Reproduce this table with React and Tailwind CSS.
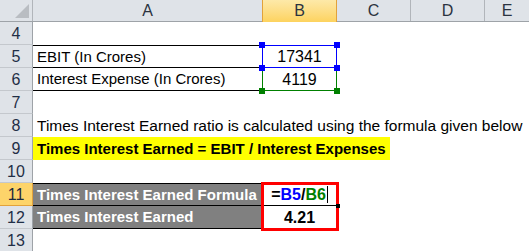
import React from "react";

const font = { fontFamily: "'Liberation Sans', Arial, sans-serif" };

function RowHead({ n, active }) {
  return (
    <div
      className={
        "h-[23px] flex items-center justify-center pt-[2px] text-[16px] border-b border-r " +
        (active
          ? "bg-[#fdd46a] border-b-[#e2a23b] border-r-[#e2a23b] text-[#1d2b3d]"
          : "bg-[#dfe3e8] border-b-[#c4c8cd] border-r-[#9ea3a8] text-[#1f2f46]")
      }
    >
      {n}
    </div>
  );
}

function Corner({ color, className }) {
  return <div className={"absolute w-[6px] h-[6px] " + color + " " + className} />;
}

export default function App() {
  return (
    <div className="w-[529px] h-[251px] overflow-hidden bg-white text-black" style={font}>
      {/* column headers */}
      <div className="flex h-[22px] bg-[#dfe3e8] border-b border-[#9ea3a8] text-[16px] text-[#2b3340]">
        <div className="w-[33px] border-r border-[#b1b5ba] relative">
          <div className="absolute right-[3px] bottom-[3px] w-0 h-0 border-l-[14px] border-l-transparent border-b-[14px] border-b-[#b9bdc2]" />
        </div>
        <div className="w-[229px] flex items-center justify-center">A</div>
        <div className="w-[75px] flex items-center justify-center bg-gradient-to-b from-[#fde9a8] to-[#fdd35e] border-x border-[#e2a23b] -mb-px">B</div>
        <div className="w-[74px] flex items-center justify-center border-r border-[#b1b5ba]">C</div>
        <div className="w-[74px] flex items-center justify-center border-r border-[#b1b5ba]">D</div>
        <div className="flex-1 flex items-center justify-center">E</div>
      </div>

      <div className="flex">
        {/* row headers */}
        <div className="w-[33px] shrink-0">
          <RowHead n={4} />
          <RowHead n={5} />
          <RowHead n={6} />
          <RowHead n={7} />
          <RowHead n={8} />
          <RowHead n={9} />
          <RowHead n={10} />
          <RowHead n={11} active />
          <RowHead n={12} />
          <RowHead n={13} />
        </div>

        {/* sheet body */}
        <div className="flex-1 text-[15px]">
          <div className="h-[23px]" />

          {/* rows 5-6 */}
          <div className="flex">
            <div className="w-[229px] border-t border-black">
              <div className="h-[22px] flex items-center pt-[1px] pl-[4px] border-b border-black">EBIT (In Crores)</div>
              <div className="h-[23px] flex items-center pt-[1px] pl-[4px] border-b border-black">Interest Expense (In Crores)</div>
            </div>
            <div className="w-[75px] relative text-[16px]">
              <div className="h-[23px] flex items-center justify-center pt-[1px] border border-[#0000ff]">17341</div>
              <div className="h-[23px] flex items-center justify-center pt-[1px] border border-t-0 border-[#008000]">4119</div>
              <Corner color="bg-[#0000ff]" className="-left-[3px] -top-[3px]" />
              <Corner color="bg-[#0000ff]" className="-right-[3px] -top-[3px]" />
              <Corner color="bg-[#0000ff]" className="-left-[3px] top-[20px]" />
              <Corner color="bg-[#0000ff]" className="-right-[3px] top-[20px]" />
              <Corner color="bg-[#008000]" className="-left-[3px] top-[43px]" />
              <Corner color="bg-[#008000]" className="-right-[3px] top-[43px]" />
            </div>
          </div>

          <div className="h-[23px]" />

          {/* row 8 */}
          <div className="h-[23px] flex items-center pt-[1px] pl-[4px] whitespace-nowrap text-[15.5px]">
            Times Interest Earned ratio is calculated using the formula given below
          </div>

          {/* row 9 */}
          <div className="h-[23px] flex">
            <div className="w-[357px] bg-[#ffff00] flex items-center pt-[1px] pl-[4px] font-bold whitespace-nowrap">
              Times Interest Earned = EBIT / Interest Expenses
            </div>
          </div>

          <div className="h-[23px]" />

          {/* rows 11-12 */}
          <div className="flex">
            <div className="w-[229px] bg-[#808080] text-white font-bold border-t border-black">
              <div className="h-[22px] flex items-center pt-[1px] pl-[4px] border-b border-black">Times Interest Earned Formula</div>
              <div className="h-[23px] flex items-center pt-[1px] pl-[4px] border-b border-black">Times Interest Earned</div>
            </div>
            <div className="w-[75px] relative font-bold text-[16px]">
              <div className="h-[23px] flex items-center justify-center pt-[1px] border-b border-black">
                <span>=</span>
                <span className="text-[#0000ff]">B5</span>
                <span>/</span>
                <span className="text-[#008000]">B6</span>
                <span className="ml-[1px] w-px h-[17px] bg-black" />
              </div>
              <div className="h-[23px] flex items-center justify-center pt-[1px]">4.21</div>
              <div className="absolute -left-[1px] -top-[1px] w-[78px] h-[49px] border-[3px] border-[#ff0000]" />
              <div className="absolute -right-[3px] top-[21px] w-[4px] h-[4px] bg-black" />
            </div>
          </div>
        </div>
      </div>
    </div>
  );
}
